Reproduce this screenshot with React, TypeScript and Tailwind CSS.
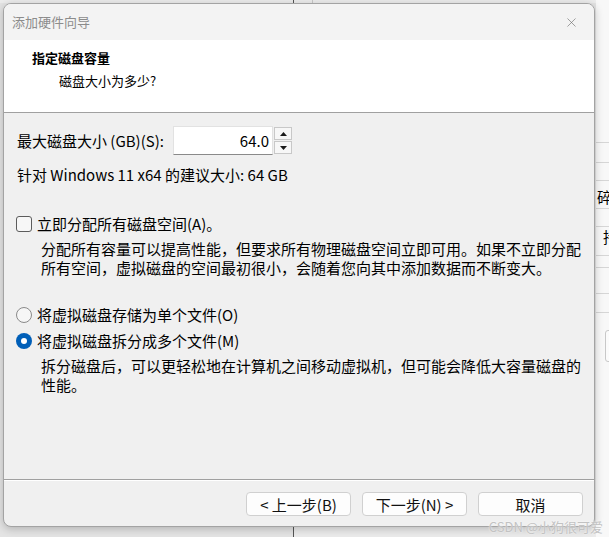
import { X } from "lucide-react";

const cjk = { fontFamily: '"Noto Sans CJK SC", "Noto Sans", sans-serif' };

function Spinner() {
  return (
    <div className="ml-px flex h-[27px] w-[18px] flex-col gap-px">
      <div className="flex h-[13px] items-center justify-center border border-[#c8c8c8] bg-[#f7f7f7]">
        <svg width="7" height="4" viewBox="0 0 7 4">
          <path d="M3.5 0 L7 4 L0 4 Z" fill="#1a1a1a" />
        </svg>
      </div>
      <div className="flex h-[13px] items-center justify-center border border-[#c8c8c8] bg-[#f7f7f7]">
        <svg width="7" height="4" viewBox="0 0 7 4">
          <path d="M0 0 L7 0 L3.5 4 Z" fill="#1a1a1a" />
        </svg>
      </div>
    </div>
  );
}

function Radio({ checked }: { checked?: boolean }) {
  if (checked) {
    return (
      <div className="flex h-4 w-4 items-center justify-center rounded-full bg-[#005fb8]">
        <div className="h-[6px] w-[6px] rounded-full bg-white" />
      </div>
    );
  }
  return <div className="h-4 w-4 rounded-full border border-[#8a8a8a] bg-[#f6f6f6]" />;
}

function Btn({ label }: { label: string }) {
  return (
    <button className="h-6 w-[105px] rounded-[4px] border border-[#d0d0d0] bg-[#fdfdfd] text-[15px] leading-none text-[#111]">
      {label}
    </button>
  );
}

// the window sitting behind the wizard, only a strip of it shows on the right
function BackWindow() {
  const lines = [142, 162, 180, 208, 226, 255, 267, 293, 312];
  return (
    <div className="absolute left-[596px] top-0 h-[537px] w-[13px] overflow-hidden bg-[#f8f8f8]">
      {lines.map((y) => (
        <div key={y} className="absolute left-0 right-0 h-px bg-[#d6d6d6]" style={{ top: y }} />
      ))}
      <div className="absolute left-[1px] top-[187px] text-[15px] leading-[19px] text-black">碎</div>
      <div className="absolute left-[7px] top-[227px] text-[15px] leading-[19px] text-black">持</div>
      <div className="absolute left-[9px] top-[330px] h-[32px] w-[20px] rounded-[3px] border border-[#c8c8c8] bg-[#fbfbfb]" />
    </div>
  );
}

export default function App() {
  return (
    <div className="relative h-[537px] w-[609px] overflow-hidden bg-[#e4e4e4]" style={cjk}>
      {/* desktop bits behind */}
      <div className="absolute left-0 top-0 h-[3px] w-[609px] bg-[#ececec]" />
      <div className="absolute left-[293px] top-0 h-[3px] w-px bg-[#555]" />
      <div className="absolute left-[312px] top-0 h-[3px] w-px bg-[#c8c8c8]" />
      <div className="absolute left-[293px] top-[527px] h-[10px] w-px bg-[#555]" />
      <div className="absolute left-[294px] top-[527px] h-[10px] w-[315px] bg-[#ebebeb]" />
      <BackWindow />

      {/* wizard dialog */}
      <div className="absolute left-[3px] top-[3px] flex h-[524px] w-[592px] flex-col overflow-hidden rounded-[8px] border border-[#a3a3a3] bg-[#f0f0f0] shadow-[0_2px_8px_rgba(0,0,0,0.22)]">
        <div className="flex h-[36px] items-center justify-between bg-[#f3f3f3] pl-[8px] pr-[15px]">
          <span className="text-[13px] text-[#8c8c8c]">添加硬件向导</span>
          <X size={15} strokeWidth={1} className="text-[#6a6a6a]" />
        </div>

        <div className="h-[72px] bg-white pl-[28px] pt-[9px]">
          <div className="text-[13px] font-bold leading-[18px] text-black">指定磁盘容量</div>
          <div className="mt-[5px] pl-[27px] text-[13px] leading-[18px] text-black">磁盘大小为多少?</div>
        </div>
        <div className="h-px bg-[#a0a0a0]" />

        <div className="flex-1 pl-[12px] pr-[8px] pt-[13px] text-[15px] leading-[19px] text-black">
          <div className="flex items-center">
            <span className="ml-px w-[156px]">最大磁盘大小 (GB)(S):</span>
            <div className="flex h-[29px] w-[100px] items-center justify-end border border-[#e2e2e2] border-b-[#8a8a8a] bg-white pr-[3px]">
              64.0
            </div>
            <Spinner />
          </div>

          <div className="ml-px mt-[10px]">针对 Windows 11 x64 的建议大小: 64 GB</div>

          <div className="mt-[30px] flex items-center gap-[5px]">
            <div className="h-4 w-4 rounded-[3px] border border-[#5c5c5c] bg-[#f7f7f7]" />
            <span>立即分配所有磁盘空间(A)。</span>
          </div>
          <p className="mt-[6px] pl-[25px]">
            分配所有容量可以提高性能，但要求所有物理磁盘空间立即可用。如果不立即分配所有空间，虚拟磁盘的空间最初很小，会随着您向其中添加数据而不断变大。
          </p>

          <div className="mt-[28px] flex items-center gap-[5px]">
            <Radio />
            <span>将虚拟磁盘存储为单个文件(O)</span>
          </div>
          <div className="mt-[7px] flex items-center gap-[5px]">
            <Radio checked />
            <span>将虚拟磁盘拆分成多个文件(M)</span>
          </div>
          <p className="mt-[6px] pl-[25px]">
            拆分磁盘后，可以更轻松地在计算机之间移动虚拟机，但可能会降低大容量磁盘的性能。
          </p>
        </div>

        <div className="h-[47px] border-t border-[#a0a0a0]">
          <div className="h-px bg-white" />
          <div className="flex justify-end gap-[11px] pr-[11px] pt-[11px]">
            <Btn label="< 上一步(B)" />
            <Btn label="下一步(N) >" />
            <Btn label="取消" />
          </div>
        </div>
      </div>

      <div className="absolute bottom-[2px] right-[6px] text-[13px] leading-[17px] text-[#c2c2c2] [text-shadow:0_0_2px_#fff]">
        CSDN @小狗很可爱
      </div>
    </div>
  );
}
